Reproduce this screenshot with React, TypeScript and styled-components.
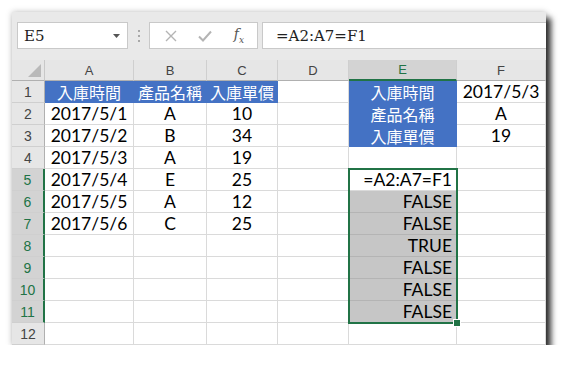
import styled, { createGlobalStyle } from "styled-components";

const GlobalStyle = createGlobalStyle`
  body {
    margin: 0;
    background: #fff;
    font-family: Lato, "Liberation Sans", "Noto Sans CJK TC", sans-serif;
  }
`;

const GREEN = "#217346";
const BLUE = "#4472c4";
const COLS = [89, 73, 71, 71, 108, 89];
const LETTERS = ["A", "B", "C", "D", "E", "F"];

const Page = styled.div`
  padding: 12px 0 0 12px;
`;

const Window = styled.div`
  width: 534px;
  background: #fff;
  box-shadow: 5px 6px 6px rgba(0, 0, 0, 0.8), 0 0 6px rgba(0, 0, 0, 0.25);
`;

const Toolbar = styled.div`
  height: 48px;
  box-sizing: border-box;
  background: #e9e9e9;
  display: flex;
  align-items: flex-start;
  padding: 10px 0 0 5px;
`;

const Box = styled.div<{ $w?: number }>`
  height: 27px;
  box-sizing: border-box;
  background: #fff;
  border: 1px solid #c9c9c9;
  display: flex;
  align-items: center;
  ${(p) => (p.$w ? `width: ${p.$w}px;` : "flex: 1; border-right: none;")}
`;

const NameText = styled.span`
  flex: 1;
  padding-left: 6px;
  font-family: "DejaVu Serif", "Liberation Serif", serif;
  font-size: 15px;
  color: #222;
`;

const Formula = styled.span`
  padding-left: 13px;
  font-family: "DejaVu Serif", "Liberation Serif", serif;
  font-size: 15px;
  color: #222;
`;

const Dots = styled.div`
  width: 21px;
  height: 27px;
  display: flex;
  flex-direction: column;
  align-items: center;
  justify-content: center;
  gap: 3px;
  & span {
    width: 2px;
    height: 2px;
    background: #a8a8a8;
  }
`;

const IconSlot = styled.div`
  width: 34px;
  display: flex;
  justify-content: center;
  align-items: center;
`;

const Fx = styled.i`
  font-family: "DejaVu Serif", "Liberation Serif", serif;
  font-size: 14px;
  color: #555;
  & sub {
    font-size: 9px;
  }
`;

const Grid = styled.div`
  position: relative;
  display: grid;
  grid-template-columns: 33px ${COLS.map((c) => c + "px").join(" ")};
  grid-template-rows: 21px repeat(12, 22px);
`;

const Corner = styled.div`
  background: #e6e6e6;
  border-right: 1px solid #c8c8c8;
  border-bottom: 1px solid #b0b0b0;
  position: relative;
  overflow: hidden;
  &::after {
    content: "";
    position: absolute;
    right: 3px;
    bottom: 3px;
    border-left: 13px solid transparent;
    border-bottom: 13px solid #b9b9b9;
  }
`;

const ColHead = styled.div<{ $active?: boolean }>`
  box-sizing: border-box;
  background: ${(p) => (p.$active ? "#d3d3d3" : "#e6e6e6")};
  color: ${(p) => (p.$active ? GREEN : "#444")};
  border-right: 1px solid #cfcfcf;
  border-bottom: ${(p) => (p.$active ? `2px solid ${GREEN}` : "1px solid #b0b0b0")};
  display: flex;
  align-items: center;
  justify-content: center;
  font-family: "Liberation Sans", sans-serif;
  font-size: 13px;
`;

const RowHead = styled.div<{ $active?: boolean }>`
  box-sizing: border-box;
  background: ${(p) => (p.$active ? "#d3d3d3" : "#e6e6e6")};
  color: ${(p) => (p.$active ? GREEN : "#444")};
  border-right: ${(p) => (p.$active ? `2px solid ${GREEN}` : "1px solid #b0b0b0")};
  border-bottom: 1px solid #cfcfcf;
  display: flex;
  align-items: center;
  justify-content: center;
  font-family: "Liberation Sans", sans-serif;
  font-size: 14px;
`;

const Cell = styled.div<{ $fill?: string; $align?: string; $cjk?: boolean }>`
  box-sizing: border-box;
  background: ${(p) => p.$fill || "#fff"};
  color: ${(p) => (p.$fill === BLUE ? "#fff" : "#000")};
  border-right: 1px solid ${(p) => (p.$fill === BLUE ? BLUE : p.$fill ? "#b4b4b4" : "#dadada")};
  border-bottom: 1px solid ${(p) => (p.$fill === BLUE ? BLUE : p.$fill ? "#b4b4b4" : "#dadada")};
  display: flex;
  align-items: center;
  justify-content: ${(p) => (p.$align === "right" ? "flex-end" : "center")};
  padding: 0 4px;
  font-size: ${(p) => (p.$cjk ? "16px" : "17.5px")};
  white-space: nowrap;
`;

const Selection = styled.div`
  position: absolute;
  left: ${33 + 89 + 73 + 71 + 71 - 1}px;
  top: 108px;
  width: 110px;
  height: 156px;
  box-sizing: border-box;
  border: 2px solid ${GREEN};
  pointer-events: none;
`;

const Handle = styled.div`
  position: absolute;
  right: -5px;
  bottom: -5px;
  width: 6px;
  height: 6px;
  background: ${GREEN};
  border: 1px solid #fff;
`;

type C = { t?: string; fill?: string; align?: string; cjk?: boolean };
const H = (t: string): C => ({ t, fill: BLUE, cjk: true });
const G = "#c6c6c6";

const rows: C[][] = [
  [H("入庫時間"), H("產品名稱"), H("入庫單價"), {}, H("入庫時間"), { t: "2017/5/3" }],
  [{ t: "2017/5/1" }, { t: "A" }, { t: "10" }, {}, H("產品名稱"), { t: "A" }],
  [{ t: "2017/5/2" }, { t: "B" }, { t: "34" }, {}, H("入庫單價"), { t: "19" }],
  [{ t: "2017/5/3" }, { t: "A" }, { t: "19" }, {}, {}, {}],
  [{ t: "2017/5/4" }, { t: "E" }, { t: "25" }, {}, { t: "=A2:A7=F1", align: "right" }, {}],
  [{ t: "2017/5/5" }, { t: "A" }, { t: "12" }, {}, { t: "FALSE", fill: G, align: "right" }, {}],
  [{ t: "2017/5/6" }, { t: "C" }, { t: "25" }, {}, { t: "FALSE", fill: G, align: "right" }, {}],
  [{}, {}, {}, {}, { t: "TRUE", fill: G, align: "right" }, {}],
  [{}, {}, {}, {}, { t: "FALSE", fill: G, align: "right" }, {}],
  [{}, {}, {}, {}, { t: "FALSE", fill: G, align: "right" }, {}],
  [{}, {}, {}, {}, { t: "FALSE", fill: G, align: "right" }, {}],
  [{}, {}, {}, {}, {}, {}],
];

const App = () => {
  return (
    <Page>
      <GlobalStyle />
      <Window>
        <Toolbar>
          <Box $w={111}>
            <NameText>E5</NameText>
            <svg width="20" height="10" viewBox="0 0 20 10">
              <polygon points="6,3 13,3 9.5,7" fill="#555" />
            </svg>
          </Box>
          <Dots>
            <span />
            <span />
            <span />
          </Dots>
          <Box $w={109}>
            <IconSlot style={{ marginLeft: 4 }}>
              <svg width="14" height="14" viewBox="0 0 14 14">
                <path d="M2 2 L12 12 M12 2 L2 12" stroke="#b4b4b4" strokeWidth="1.4" />
              </svg>
            </IconSlot>
            <IconSlot>
              <svg width="16" height="14" viewBox="0 0 16 14">
                <path d="M2 7.5 L6 11.5 L14 2.5" stroke="#b4b4b4" strokeWidth="2" fill="none" />
              </svg>
            </IconSlot>
            <IconSlot>
              <Fx>
                f<sub>x</sub>
              </Fx>
            </IconSlot>
          </Box>
          <Box style={{ marginLeft: 4 }}>
            <Formula>=A2:A7=F1</Formula>
          </Box>
        </Toolbar>
        <Grid>
          <Corner />
          {LETTERS.map((l) => (
            <ColHead key={l} $active={l === "E"}>
              {l}
            </ColHead>
          ))}
          {rows.map((r, i) => [
            <RowHead key={`h${i}`} $active={i >= 4 && i <= 10}>
              {i + 1}
            </RowHead>,
            ...r.map((c, j) => (
              <Cell key={`${i}-${j}`} $fill={c.fill} $align={c.align} $cjk={c.cjk}>
                {c.t}
              </Cell>
            )),
          ])}
          <Selection>
            <Handle />
          </Selection>
        </Grid>
      </Window>
    </Page>
  );
};

export default App;
